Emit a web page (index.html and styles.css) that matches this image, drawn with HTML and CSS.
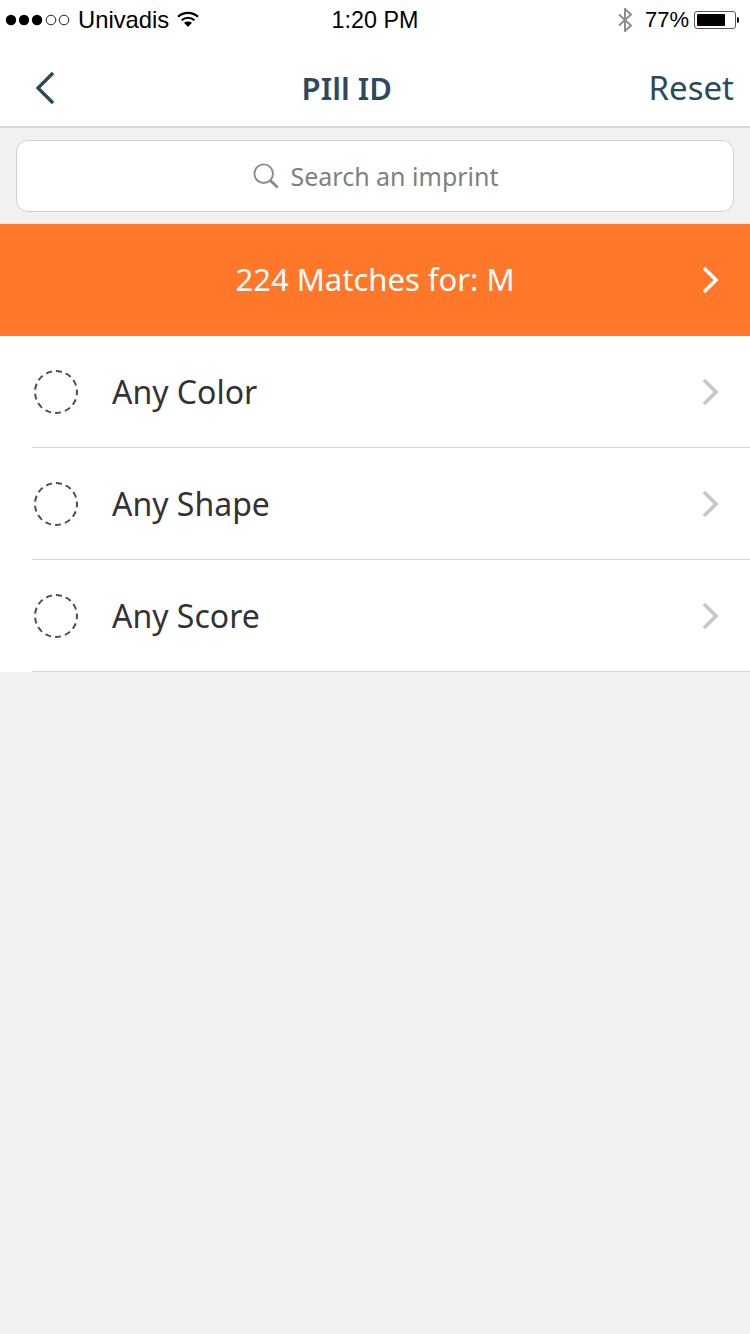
FILE: index.html

```html
<!DOCTYPE html>
<html lang="en">
<head>
    <meta charset="UTF-8">
    <meta name="viewport" content="width=device-width, initial-scale=1.0">
    <title>Pill ID</title>
    <link rel="stylesheet" href="styles.css">
</head>
<body>
    <!-- Status bar -->
    <div class="status-bar">
        <div class="status-left">
            <svg class="signal" width="71" height="14" viewBox="0 0 71 14">
                <circle cx="12" cy="7" r="5.2" fill="#000"/>
                <circle cx="25" cy="7" r="5.2" fill="#000"/>
                <circle cx="38" cy="7" r="5.2" fill="#000"/>
                <circle cx="52" cy="7" r="4.8" fill="none" stroke="#222" stroke-width="1"/>
                <circle cx="65" cy="7" r="4.8" fill="none" stroke="#222" stroke-width="1"/>
            </svg>
            <span class="carrier">Univadis</span>
            <svg class="wifi" width="22" height="17" viewBox="0 0 22 16">
                <path d="M1 5.2C6.8 0 15.2 0 21 5.2" fill="none" stroke="#000" stroke-width="2.2"/>
                <path d="M4.6 8.8C8.4 5.4 13.6 5.4 17.4 8.8" fill="none" stroke="#000" stroke-width="2.2"/>
                <path d="M7 11.3C9.4 9.4 12.6 9.4 15 11.3L11 15.6Z" fill="#000"/>
            </svg>
        </div>
        <div class="status-time">1:20 PM</div>
        <div class="status-right">
            <svg class="bluetooth" width="16" height="24" viewBox="0 0 16 24">
                <path d="M2 6.5L14 17.5L8 23V1L14 6.5L2 17.5" fill="none" stroke="#8e8e8e" stroke-width="2"/>
            </svg>
            <span class="battery-pct">77%</span>
            <div class="battery">
                <div class="battery-body"><div class="battery-fill"></div></div>
                <div class="battery-tip"></div>
            </div>
        </div>
    </div>

    <!-- Nav bar -->
    <div class="nav-bar">
        <svg class="back" width="20" height="34" viewBox="0 0 20 34">
            <path d="M18 2L3 17L18 32" fill="none" stroke="#2d4a5c" stroke-width="3.4"/>
        </svg>
        <h1 class="nav-title">PIll ID</h1>
        <span class="nav-reset">Reset</span>
    </div>

    <!-- Search -->
    <div class="search-wrap">
        <div class="search-box">
            <svg width="26" height="26" viewBox="0 0 28 28">
                <circle cx="11.5" cy="11.5" r="10" fill="none" stroke="#8a8a8e" stroke-width="2"/>
                <path d="M18.5 18.5L26.5 26.5" fill="none" stroke="#8a8a8e" stroke-width="3"/>
            </svg>
            <span class="search-text">Search an imprint</span>
        </div>
    </div>

    <!-- Matches banner -->
    <div class="matches">
        <span>224 Matches for: M</span>
        <svg class="chevron" width="18" height="28" viewBox="0 0 18 28">
            <path d="M2 2L14 14L2 26" fill="none" stroke="#fff" stroke-width="3.6"/>
        </svg>
    </div>

    <!-- Filters -->
    <div class="filters">
        <div class="filter-row">
            <div class="swatch"></div>
            <span class="filter-label">Any Color</span>
            <svg class="chevron" width="18" height="28" viewBox="0 0 18 28">
                <path d="M2 2L14 14L2 26" fill="none" stroke="#c7c7cc" stroke-width="3.6"/>
            </svg>
        </div>
        <div class="filter-row">
            <div class="swatch"></div>
            <span class="filter-label">Any Shape</span>
            <svg class="chevron" width="18" height="28" viewBox="0 0 18 28">
                <path d="M2 2L14 14L2 26" fill="none" stroke="#c7c7cc" stroke-width="3.6"/>
            </svg>
        </div>
        <div class="filter-row">
            <div class="swatch"></div>
            <span class="filter-label">Any Score</span>
            <svg class="chevron" width="18" height="28" viewBox="0 0 18 28">
                <path d="M2 2L14 14L2 26" fill="none" stroke="#c7c7cc" stroke-width="3.6"/>
            </svg>
        </div>
    </div>
</body>
</html>
```

FILE: styles.css

```css
html, body { margin: 0; padding: 0; }
body { width: 750px; height: 1334px; overflow: hidden; background: #f1f1f1; font-family: "Noto Sans", sans-serif; }

.status-bar { height: 40px; background: #fff; display: grid; grid-template-columns: 1fr auto 1fr; align-items: center; font-family: "Liberation Sans", sans-serif; font-size: 22px; color: #000; }
.status-left { display: flex; align-items: center; }
.signal { margin-left: -1px; }
.carrier { margin-left: 8px; font-size: 23.8px; }
.wifi { margin-left: 8px; margin-top: -2px; }
.status-time { font-size: 23.3px; }
.status-right { display: flex; align-items: center; justify-content: flex-end; padding-right: 11px; }
.bluetooth { margin-right: 3px; }
.battery-pct { margin-left: 9px; margin-right: 5px; }
.battery { display: flex; align-items: center; }
.battery-body { width: 42px; height: 18px; border: 1px solid #555; border-radius: 3px; padding: 2px; box-sizing: border-box; }
.battery-fill { width: 28px; height: 12px; background: #000; border-radius: 1px; }
.battery-tip { width: 2px; height: 6px; background: #000; margin-left: 1px; border-radius: 0 2px 2px 0; }

.nav-bar { height: 88px; box-sizing: border-box; padding: 9px 16px 0 35px; background: #fff; border-bottom: 2px solid #d5d8da; display: flex; align-items: center; justify-content: space-between; color: #2d4a5c; }
.nav-title { margin: 0 10px 0 0; font-size: 31px; font-weight: 600; }
.nav-reset { font-size: 33px; }

.search-wrap { height: 96px; padding: 12px 16px; box-sizing: border-box; }
.search-box { height: 72px; padding-left: 2px; background: #fff; border: 1px solid #d2d2d2; border-radius: 12px; box-sizing: border-box; display: flex; align-items: center; justify-content: center; gap: 11px; }
.search-text { font-size: 25px; color: #808080; }

.matches { height: 112px; padding-bottom: 2px; box-sizing: border-box; background: #ff7728; color: #fff; font-size: 31px; display: flex; align-items: center; justify-content: center; position: relative; }
.matches .chevron { position: absolute; right: 30px; top: 42px; }

.filters { background: #fff; }
.filter-row { height: 112px; padding-bottom: 1px; display: flex; align-items: center; position: relative; box-sizing: border-box; }
.filter-row::after { content: ""; position: absolute; left: 32px; right: 0; bottom: 0; height: 1px; background: #d2d8db; }
.filter-row .chevron { position: absolute; right: 30px; top: 42px; }
.swatch { width: 44px; height: 44px; border: 2px dashed #3f5159; border-radius: 50%; box-sizing: border-box; margin-left: 34px; }
.filter-label { margin-left: 34px; font-size: 32px; color: #333; }
```
